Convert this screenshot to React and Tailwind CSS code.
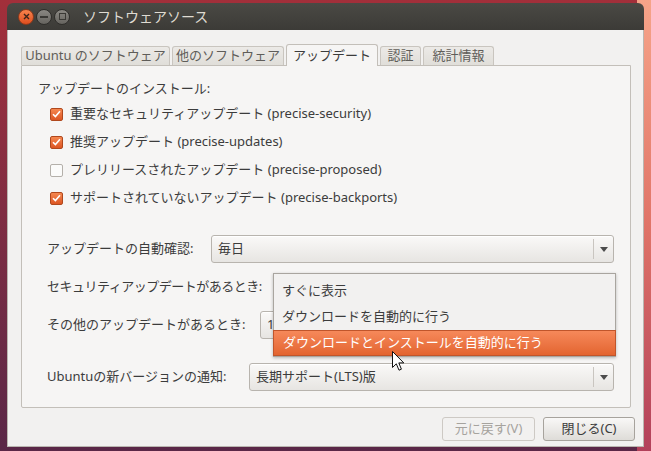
import React from 'react';

const tabs = [
  { label: 'Ubuntu のソフトウェア', w: 'w-[149px]' },
  { label: '他のソフトウェア', w: 'w-[112px]' },
  { label: 'アップデート', w: 'w-[92px]', active: true },
  { label: '認証', w: 'w-[41px]' },
  { label: '統計情報', w: 'w-[71px]' },
];

const sources = [
  { label: '重要なセキュリティアップデート (precise-security)', checked: true },
  { label: '推奨アップデート (precise-updates)', checked: true },
  { label: 'プレリリースされたアップデート (precise-proposed)', checked: false },
  { label: 'サポートされていないアップデート (precise-backports)', checked: true },
];

const Checkbox = ({ checked }) =>
  checked ? (
    <span className="w-[13px] h-[13px] rounded-[2px] border border-[#b0481d] bg-gradient-to-b from-[#f5874f] to-[#dc5522] flex items-center justify-center">
      <svg width="9" height="8" viewBox="0 0 9 8">
        <path d="M1 4.2 L3.4 6.6 L8 1.2" fill="none" stroke="#fff" strokeWidth="1.6" />
      </svg>
    </span>
  ) : (
    <span className="w-[13px] h-[13px] rounded-[2px] border border-[#b4b0aa] bg-[#fbfbfa]" />
  );

const Arrow = () => (
  <svg width="8" height="5" viewBox="0 0 8 5">
    <polygon points="0,0 8,0 4,5" fill="#4c4c4c" />
  </svg>
);

const Combo = ({ children }) => (
  <div className="flex-1 h-[28px] flex items-center rounded-[3px] border border-[#b8b4ae] bg-gradient-to-b from-[#faf9f8] to-[#e7e5e2] shadow-[inset_0_1px_0_#ffffff]">
    <span className="flex-1 pl-[6px] text-[#3c3c3c] truncate">{children}</span>
    <span className="w-[20px] h-[20px] border-l border-[#c9c5c0] flex items-center justify-center">
      <Arrow />
    </span>
  </div>
);

const Row = ({ label, w, tight, children }) => (
  <div className="flex items-center h-[28px] pl-[25px] pr-[16px]">
    <span className={`${w} shrink-0 whitespace-nowrap text-[#3c3c3c] ${tight ? 'tracking-[-0.5px]' : ''}`}>{label}</span>
    {children}
  </div>
);

const App = () => {
  return (
    <div className="relative w-[651px] h-[451px] overflow-hidden bg-gradient-to-b from-[#a22f3a] to-[#5a2747] font-['Noto_Sans','Noto_Sans_CJK_JP',sans-serif] text-[13px]">
      <div className="absolute top-0 right-0 bottom-0 w-[14px] bg-gradient-to-b from-[#f6a489] via-[#e07468] to-[#b2405a]" />

      <div className="relative z-10 ml-[7px] mt-[3px] w-[637px] h-[444px] flex flex-col rounded-t-[6px] overflow-hidden">
        {/* title bar */}
        <div className="h-[27px] shrink-0 flex items-center bg-gradient-to-b from-[#4a4944] to-[#3c3b37]">
          <div className="flex items-center gap-[2px] pl-[11px]">
            <span className="w-[16px] h-[16px] rounded-full border border-[#8e3a1c] bg-gradient-to-b from-[#f8834c] to-[#de4d1d] flex items-center justify-center">
              <svg width="7" height="7" viewBox="0 0 7 7">
                <path d="M1 1 L6 6 M6 1 L1 6" stroke="#3b2419" strokeWidth="1.4" />
              </svg>
            </span>
            <span className="w-[16px] h-[16px] rounded-full border border-[#2f2e2b] bg-gradient-to-b from-[#8a8883] to-[#66645f] flex items-center justify-center">
              <span className="w-[8px] h-[2px] bg-[#3a3935]" />
            </span>
            <span className="w-[16px] h-[16px] rounded-full border border-[#2f2e2b] bg-gradient-to-b from-[#8a8883] to-[#66645f] flex items-center justify-center">
              <span className="w-[7px] h-[7px] border-[1.5px] border-[#3a3935]" />
            </span>
          </div>
          <span className="ml-[13px] text-[14px] text-[#dfdbd2]">ソフトウェアソース</span>
        </div>

        {/* body */}
        <div className="flex-1 flex flex-col bg-[#f2f1f0] border-x border-b border-[#bab6b0] pl-[13px] pr-[8px]">
          <div className="flex items-end gap-[2px] pt-[13px] h-[35px] pr-[5px]">
            {tabs.map(t =>
              t.active ? (
                <div
                  key={t.label}
                  className={`${t.w} h-[22px] -mb-px relative z-10 flex items-center justify-center rounded-t-[3px] border border-b-0 border-[#c3bfb9] bg-[#f6f5f4] text-[#3c3c3c]`}
                >
                  {t.label}
                </div>
              ) : (
                <div
                  key={t.label}
                  className={`${t.w} h-[19px] flex items-center justify-center rounded-t-[3px] border border-b-0 border-[#c9c5bf] bg-gradient-to-b from-[#eceae7] to-[#e0ded9] text-[#5f5d59]`}
                >
                  {t.label}
                </div>
              )
            )}
          </div>

          {/* notebook panel */}
          <div className="w-[610px] h-[343px] border border-[#c3bfb9] bg-[#f6f5f4] rounded-b-[2px] pt-[12px]">
            <div className="h-[22px] flex items-center pl-[16px] text-[#3c3c3c]">
              アップデートのインストール:
            </div>
            {sources.map(s => (
              <div key={s.label} className="h-[28px] flex items-center gap-[7px] pl-[28px] text-[#3c3c3c]">
                <Checkbox checked={s.checked} />
                <span>{s.label}</span>
              </div>
            ))}

            <div className="mt-[23px] flex flex-col gap-[10px]">
              <Row label="アップデートの自動確認:" w="w-[164px]">
                <Combo>毎日</Combo>
              </Row>
              <Row label="セキュリティアップデートがあるとき:" w="w-[226px]" tight>
                <div className="relative flex-1 flex">
                  <Combo />
                  <div className="absolute top-0 left-0 right-[-2px] h-[84px] z-20 flex flex-col border border-[#a9a59f] bg-[#f2f1f0] pt-[3px] shadow-[0_1px_3px_rgba(0,0,0,0.25)]">
                    <div className="h-[27px] flex items-center pl-[8px] text-[#3c3c3c]">すぐに表示</div>
                    <div className="h-[27px] flex items-center pl-[8px] text-[#3c3c3c]">ダウンロードを自動的に行う</div>
                    <div className="h-[26px] -mx-px flex items-center pl-[9px] border border-[#c0552b] bg-gradient-to-b from-[#f6895a] to-[#e3642f] text-white">
                      ダウンロードとインストールを自動的に行う
                    </div>
                  </div>
                </div>
              </Row>
              <Row label="その他のアップデートがあるとき:" w="w-[213px]">
                <Combo>1</Combo>
              </Row>
              <div className="mt-[14px]">
                <Row label="Ubuntuの新バージョンの通知:" w="w-[202px]">
                  <Combo>長期サポート(LTS)版</Combo>
                </Row>
              </div>
            </div>
          </div>

          {/* buttons */}
          <div className="flex justify-end gap-[8px] mt-[9px]">
            <button className="w-[93px] h-[24px] rounded-[3px] border border-[#cdc9c4] bg-[#f2f1f0] text-[#a6a39e]">
              元に戻す(V)
            </button>
            <button className="w-[92px] h-[24px] rounded-[3px] border border-[#a7a39d] bg-gradient-to-b from-[#f9f8f7] to-[#dedcd8] text-[#3c3c3c]">
              閉じる(C)
            </button>
          </div>
        </div>
      </div>

      {/* mouse pointer */}
      <svg className="absolute z-30 left-[392px] top-[351px]" width="13" height="21" viewBox="0 0 13 21">
        <path d="M0.5 0.5 L0.5 16.5 L4.3 12.8 L7 19.2 L9.4 18.2 L6.8 11.9 L11.8 11.9 Z" fill="#fff" stroke="#111" strokeWidth="1" />
      </svg>
    </div>
  );
};

export default App;
